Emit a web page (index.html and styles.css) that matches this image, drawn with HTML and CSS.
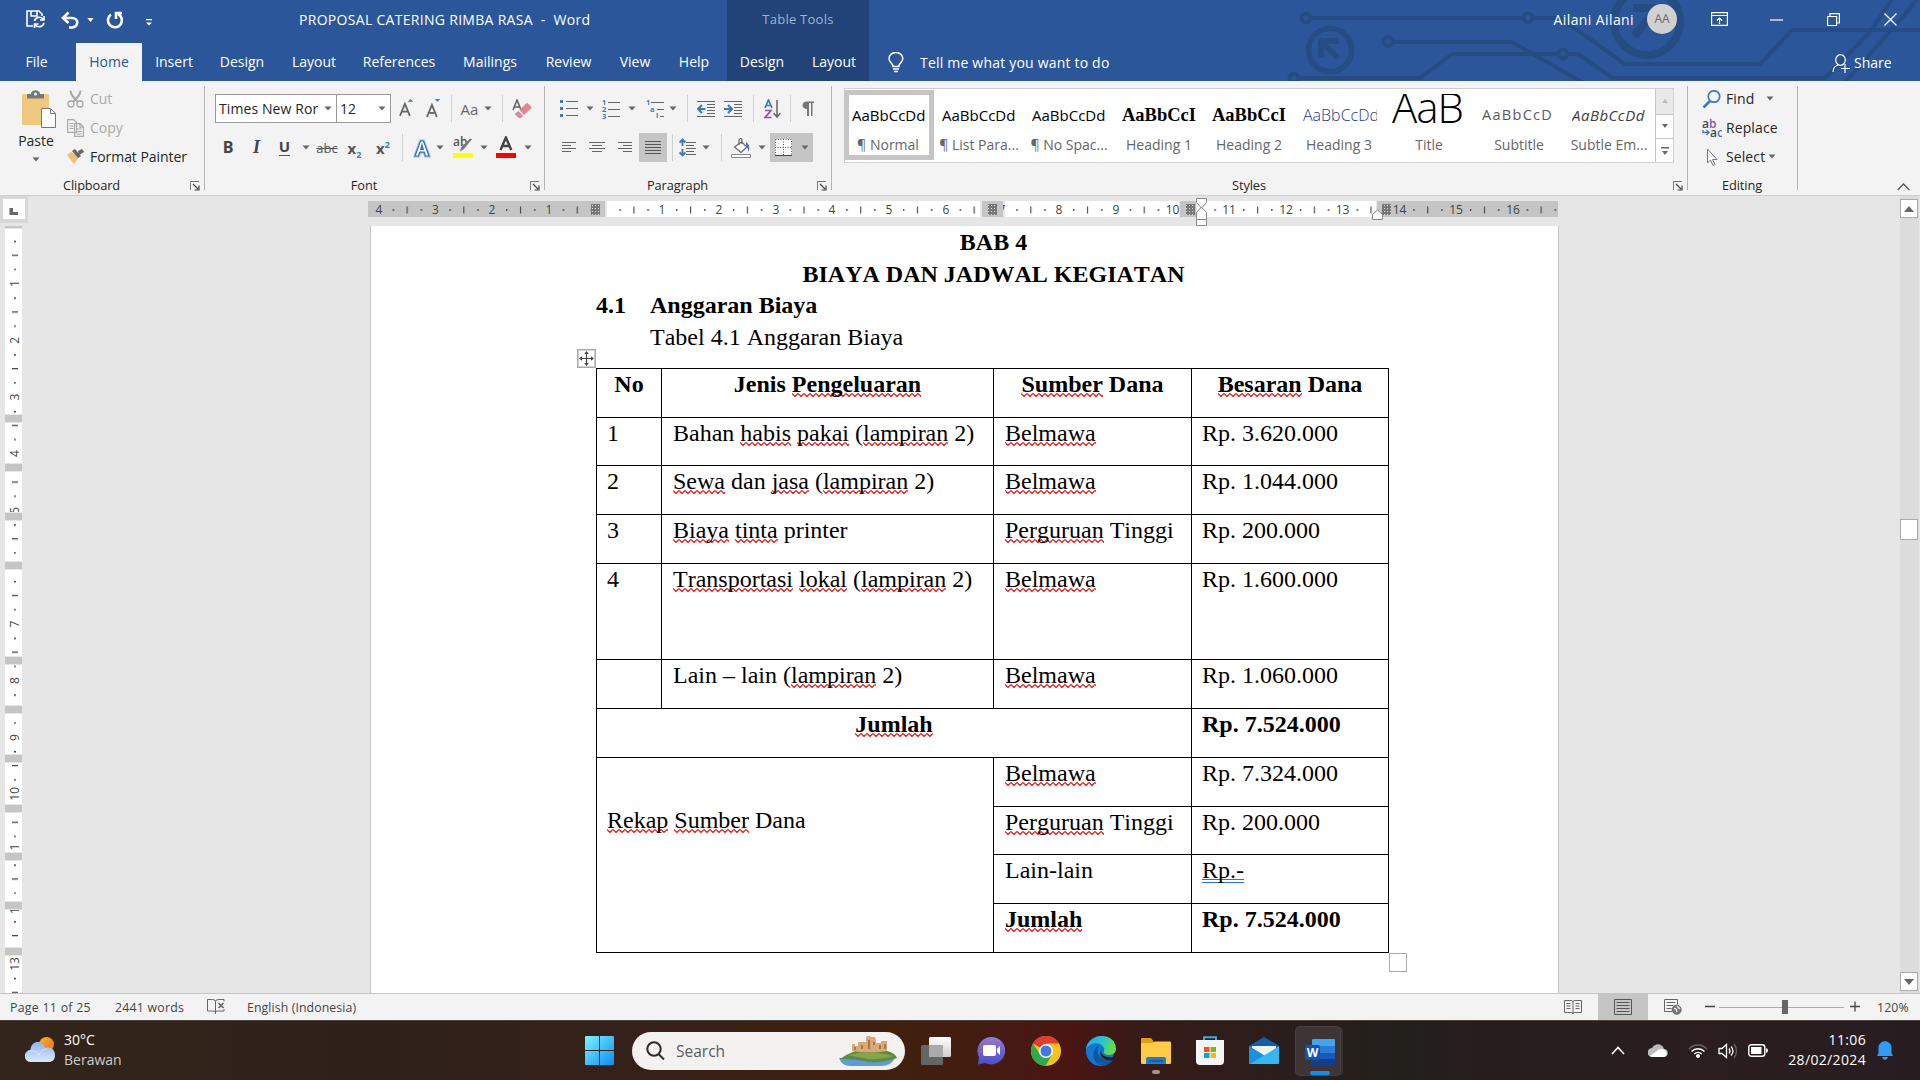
FILE: index.html
```html
<!DOCTYPE html>
<html lang="en">
<head>
<meta charset="utf-8">
<title>PROPOSAL CATERING RIMBA RASA - Word</title>
<link rel="stylesheet" href="styles.css">
</head>
<body>
<svg class="defs" width="0" height="0">
  <defs>
    <symbol id="caret" viewBox="0 0 8 5"><path d="M.5 .5h7L4 4.5z" fill="#666"/></symbol>
    <symbol id="launcher" viewBox="0 0 10 10"><path d="M.5 9V.5H9" fill="none" stroke="#777"/><path d="M3 3l5 5M9 4.500V9H4.500" fill="none" stroke="#444" stroke-width="1.200"/></symbol>
  </defs>
</svg>

<header class="titlebar">
  <svg class="circuit" width="640" height="81" viewBox="0 0 640 81" fill="none" stroke="#264c84" stroke-width="4">
    <circle cx="26" cy="18" r="4.500"/><path d="M31 18h213M252 18h28l65 46h135l32-34h128"/><circle cx="248" cy="18" r="4.500"/>
    <circle cx="50" cy="50" r="21.500" stroke-width="5.500"/><path d="M41 58V41h18M42 42l16 16" stroke-width="6"/>
    <circle cx="108" cy="41.500" r="4.500"/><path d="M113 42h119l70 40"/>
    <circle cx="14" cy="78" r="4.500"/><path d="M19 78h121l32-24h106"/><circle cx="283" cy="54" r="4.500"/><path d="M288 54h10l35 24h212l45-46 23-34"/>
    <path d="M565 82L622 18l16-20"/>
    <circle cx="367" cy="22" r="33" stroke-width="8"/><path d="M353 8h25v24M376 10l-22 26" stroke-width="8"/>
  </svg>
  <div class="titlerow">
    <div class="qat">
      <svg width="20" height="20" viewBox="0 0 20 20" fill="none" stroke="#fff" stroke-width="1.600"><path d="M7 16H1V1h12l3 3v2M5 1v5h6V1"/><path d="M8.500 11a5 5 0 0 1 9-1.500M18 6v4h-4M18 13a5 5 0 0 1-9 1.500M8.500 18v-4h4"/></svg>
      <svg width="19" height="18" viewBox="0 0 19 18" fill="none" stroke="#fff" stroke-width="2.600"><path d="M2 7h9c7 0 7 9 0 9.500H8M7.500 1.500L2 7l5.500 5"/></svg>
      <svg class="mini" width="7" height="4" viewBox="0 0 8 5"><path d="M0 0h8L4 5z" fill="#fff"/></svg>
      <svg width="18" height="18" viewBox="0 0 18 18" fill="none" stroke="#fff" stroke-width="2.600"><path d="M5 3.500A7 7 0 1 0 12 3M10 8V2h6"/></svg>
      <svg class="more" width="6" height="7" viewBox="0 0 6 7"><path d="M0 0h6v1.300H0zM0 3.500h6L3 6.500z" fill="#fff"/></svg>
    </div>
    <div class="doctitle">PROPOSAL CATERING RIMBA RASA&nbsp; -&nbsp; Word</div>
    <div class="context">Table Tools</div>
    <div class="account">Ailani Ailani</div>
    <div class="avatar">AA</div>
    <div class="winbtns">
      <svg width="17" height="14" viewBox="0 0 17 14" fill="none" stroke="#fff" stroke-width="1.200"><path d="M.6.600h15.800v12.800H.6zM.6 3.500h15.800M8.500 12V6M5.800 8.500L8.500 6l2.700 2.500"/></svg>
      <svg width="13" height="13" viewBox="0 0 13 13" stroke="#fff" stroke-width="1.200"><path d="M0 7h13"/></svg>
      <svg width="13" height="13" viewBox="0 0 13 13" fill="none" stroke="#fff" stroke-width="1.200"><path d="M.6 3.500h9v9h-9zM3 3.500V.6h9.400v9.400H9.600"/></svg>
      <svg width="13" height="13" viewBox="0 0 13 13" fill="none" stroke="#fff" stroke-width="1.300"><path d="M.5.500l12 12M12.500.500l-12 12"/></svg>
    </div>
  </div>
  <nav class="tabs">
    <span>File</span><span class="active">Home</span><span>Insert</span><span>Design</span><span>Layout</span><span>References</span><span>Mailings</span><span>Review</span><span>View</span><span class="help">Help</span><span class="ctx">Design</span><span class="ctx">Layout</span>
    <div class="tell"><svg width="16" height="21" viewBox="0 0 16 21" fill="none" stroke="#fff" stroke-width="1.500"><path d="M5 14.500c0-3-4-4-4-8a6.800 6 0 0 1 13.800 0c0 4-4 5-4 8zM5 17h6M6 19.500h4"/></svg>Tell me what you want to do</div>
    <div class="share"><svg width="18" height="19" viewBox="0 0 18 19" fill="none" stroke="#fff" stroke-width="1.200"><ellipse cx="8.500" cy="6" rx="4.800" ry="5.300"/><path d="M1 18c0-4 2-6 5-7M13 10v9M9 14.500h9"/></svg>Share</div>
  </nav>
</header>

<section class="ribbon">
  <div class="group clipboard">
    <div class="groupbody">
      <div class="paste">
        <svg width="34" height="38" viewBox="0 0 34 38"><rect y="4" width="27" height="31" rx="1.500" fill="#edc87e"/><path d="M5 8.500V4h4c0-5 9-5 9 0h4v4.500z" fill="#777"/><circle cx="13.500" cy="4" r="1.500" fill="#f3f3f3"/><path d="M19.500 18.500h9l5 5v14h-14z" fill="#fff" stroke="#777"/><path d="M28.500 18.500v5h5" fill="none" stroke="#777"/></svg>
        <span>Paste</span><svg width="8" height="5"><use href="#caret"/></svg>
      </div>
      <div class="cliplist">
        <div class="off"><svg width="17" height="18" viewBox="0 0 17 18" fill="none" stroke="#aaa" stroke-width="1.400"><circle cx="4" cy="14" r="3"/><circle cx="13" cy="14" r="3"/><path d="M3.500.500c0 4 3 7 7.500 11.500M13.500.500c0 4-3 7-7.500 11.500" stroke-width="2"/></svg>Cut</div>
        <div class="off"><svg width="17" height="18" viewBox="0 0 17 18" fill="#f3f3f3" stroke="#aaa" stroke-width="1.200"><path d="M.6.600h6l3 3v9.800h-9zM7.600 4.600h5.500l3.300 3.300v9.500H7.600zM13 4.600v3.500h3.400M2.500 4.500h4M2.500 7h4M2.500 9.500h4M9.500 10h5M9.500 12.500h5M9.500 15h5"/></svg>Copy</div>
        <div><svg width="17" height="15" viewBox="0 0 17 15"><path d="M0 6l4-3 8 5-5 7z" fill="#edc07a"/><path d="M5 2l3-2 6 7-3 2zM11 2l4-2 2 3-5 3z" fill="#666"/></svg>Format Painter</div>
      </div>
    </div>
    <div class="label">Clipboard<svg width="10" height="10"><use href="#launcher"/></svg></div>
  </div>

  <div class="group font">
    <div class="row fontrow1">
      <div class="combo name"><span>Times New Ror</span><svg width="8" height="5"><use href="#caret"/></svg></div>
      <div class="combo size"><span>12</span><svg width="8" height="5"><use href="#caret"/></svg></div>
      <svg class="grow" width="15" height="19" viewBox="0 0 14 18"><path d="M.8 17L5.500 5.500 10.200 17M2.500 13h6" fill="none" stroke="#666" stroke-width="1.700"/><path d="M8 3.500L10.700 1l2.800 2.500z" fill="#4a7ebb"/></svg>
      <svg class="grow" width="15" height="19" viewBox="0 0 14 18"><path d="M.8 18L5.500 6.500 10.200 18M2.500 14h6" fill="none" stroke="#666" stroke-width="1.700"/><path d="M8 1h5.500l-2.700 2.500z" fill="#4a7ebb"/></svg>
      <i class="sep"></i>
      <span class="gray">Aa</span>
      <svg width="8" height="5"><use href="#caret"/></svg>
      <i class="sep"></i>
      <svg width="20" height="20" viewBox="0 0 20 20"><path d="M1 11L5 1l4 10M2 8h6" fill="none" stroke="#666" stroke-width="1.600"/><path d="M7.500 11L14 4.500q1-1 2 0l3 3q1 1 0 2L12 16z" fill="#e58398"/><path d="M6.500 12l4.500 5-2 2q-1 .5-2 0L3.500 16q-1-1 0-2z" fill="#e58398"/></svg>
    </div>
    <div class="row fontrow2">
      <b class="fmt">B</b><b class="fmt it">I</b><b class="fmt ul">U</b>
      <svg width="8" height="5"><use href="#caret"/></svg>
      <span class="strike">abc</span>
      <span class="script">x<sub>2</sub></span>
      <span class="script">x<sup>2</sup></span>
      <i class="sep"></i>
      <svg width="20" height="20" viewBox="0 0 20 20"><path d="M3 18L8.500 3h3L17 18h-3.500l-1.300-3.800H7.800L6.500 18zM8.700 11.500h2.600L10 7z" fill="#fff" stroke="#9cc3ee" stroke-width="3"/><path d="M3 18L8.500 3h3L17 18h-3.500l-1.300-3.800H7.800L6.500 18zM8.700 11.500h2.600L10 7z" fill="#fff" stroke="#2f6fba" stroke-width="1.200"/></svg>
      <svg width="8" height="5"><use href="#caret"/></svg>
      <svg class="tall" width="20" height="22" viewBox="0 -2 20 22"><text x="0" y="8" class="abtext">ab</text><path d="M19 1L11 11l-4 2.500 1-4 9-9z" fill="#777"/><path d="M0 15h20v5H0z" fill="#ff0"/></svg>
      <svg width="8" height="5"><use href="#caret"/></svg>
      <svg class="tall" width="20" height="22" viewBox="0 -2 20 22"><path d="M4.500 12L9.900-.5 15.300 12M6.500 8h7" fill="none" stroke="#444" stroke-width="2.400"/><path d="M0 15h20v5H0z" fill="red"/></svg>
      <svg width="8" height="5"><use href="#caret"/></svg>
    </div>
    <div class="label">Font<svg width="10" height="10"><use href="#launcher"/></svg></div>
  </div>

  <div class="group para">
    <div class="row pararow1">
      <svg width="18" height="19" viewBox="0 0 18 19"><path d="M0 1h3v3H0zM0 8h3v3H0zM0 15h3v3H0z" fill="#4179b5"/><path d="M6 2.500h12M6 9.500h12M6 16.500h12" stroke="#666"/></svg>
      <svg width="8" height="5"><use href="#caret"/></svg>
      <svg width="18" height="20" viewBox="0 0 18 20"><g class="num"><text x="0" y="6">1</text><text x="0" y="13">2</text><text x="0" y="20">3</text></g><path d="M6 3.500h12M6 10.500h12M6 17.500h12" stroke="#666"/></svg>
      <svg width="8" height="5"><use href="#caret"/></svg><i></i>
      <svg width="18" height="20" viewBox="0 0 18 20"><g class="num"><text x="0" y="6">1</text><text x="4" y="13">a</text><text x="10" y="19">i</text></g><path d="M5 3.500h13M11 10.500h7M14 17.500h4" stroke="#666"/></svg>
      <svg width="8" height="5"><use href="#caret"/></svg>
      <i class="sep"></i>
      <svg width="18" height="18" viewBox="0 0 18 18"><path d="M0 1.500h18M10 4.500h8M10 7.500h8M10 10.500h8M10 13.500h8M0 16.500h18" stroke="#666"/><path d="M8.500 9H2M5 5L1 9l4 4" stroke="#4179b5" stroke-width="2.200" fill="none"/></svg>
      <svg width="18" height="18" viewBox="0 0 18 18"><path d="M0 1.500h18M10 4.500h8M10 7.500h8M10 10.500h8M10 13.500h8M0 16.500h18" stroke="#666"/><path d="M0 9h7M4 5l4 4-4 4" stroke="#4179b5" stroke-width="2.200" fill="none"/></svg>
      <i class="sep"></i>
      <svg width="17" height="20" viewBox="0 0 17 20" fill="none" stroke-width="1.700"><path d="M1 9l3.500-8L8 9M2 6.500h5" stroke="#4179b5"/><path d="M1 11.500h6L1 18.500h6.500" stroke="#8a55b0"/><path d="M13 1v17M9.500 14l3.500 4 3.500-4" stroke="#666" stroke-width="1.500"/></svg>
      <i class="sep"></i>
      <svg width="12" height="16" viewBox="0 0 12 16"><path d="M5 8C-1 8-1 .5 5 .500h7v1.500h-1.500V15H9V2H7v13H5z" fill="#777"/></svg>
    </div>
    <div class="row pararow2">
      <svg width="14" height="13" viewBox="0 0 14 13" stroke="#666"><path d="M0 1.500h14M0 4.500h9M0 7.500h14M0 10.500h9"/></svg>
      <svg width="16" height="13" viewBox="0 0 16 13" stroke="#666"><path d="M0 1.500h16M3 4.500h10M0 7.500h16M3 10.500h10"/></svg><i></i>
      <svg width="14" height="13" viewBox="0 0 14 13" stroke="#666"><path d="M0 1.500h14M5 4.500h9M0 7.500h14M5 10.500h9"/></svg>
      <span class="pressed"><svg width="16" height="14" viewBox="0 0 16 14" stroke="#555"><path d="M0 .500h16M0 3.500h16M0 6.500h16M0 9.500h16M0 12.500h16"/></svg></span>
      <i class="sep"></i>
      <svg width="18" height="19" viewBox="0 0 18 19"><path d="M7 4.500h10M7 7.500h8M7 10.500h10M7 13.500h8M7 16.500h10" stroke="#666"/><path d="M3.500 1v7M.6 4.500L3.500 1.500l3 3M3.500 11v7M.6 14.500l2.900 3 3-3" stroke="#3f78c0" stroke-width="1.900" fill="none"/></svg>
      <svg width="8" height="5"><use href="#caret"/></svg>
      <i class="sep"></i>
      <svg width="20" height="20" viewBox="0 0 20 20"><path d="M3.500 9l7-5 5.500 5-6 5.500z" fill="#fff" stroke="#666" stroke-width="1.200"/><path d="M8 7V2q2-3 3 0v4" fill="none" stroke="#666" stroke-width="1.200"/><path d="M15 4q5 3 2.500 10Q17 10 15 8z" fill="#4179b5"/><path d="M.5 16.500h19v3H.5z" fill="#fff" stroke="#888"/></svg>
      <svg width="8" height="5"><use href="#caret"/></svg>
      <span class="pressed borders"><svg width="17" height="17" viewBox="0 0 17 17"><path d="M0 0h17v17H0z" fill="#fff"/><path d="M.5.500h16v16M.5.500v16M8.500 0v16M0 8.500h17" stroke="#555" stroke-dasharray="1 1.500" fill="none"/><path d="M0 16.500h17" stroke="#444"/></svg><svg width="8" height="5"><use href="#caret"/></svg></span>
    </div>
    <div class="label">Paragraph<svg width="10" height="10"><use href="#launcher"/></svg></div>
  </div>

  <div class="group styles">
    <div class="gallery">
      <div class="style on"><span>AaBbCcDd</span><em>¶ Normal</em></div>
      <div class="style"><span>AaBbCcDd</span><em>¶ List Para...</em></div>
      <div class="style"><span>AaBbCcDd</span><em>¶ No Spac...</em></div>
      <div class="style"><span class="h1">AaBbCcI</span><em>Heading 1</em></div>
      <div class="style"><span class="h1">AaBbCcI</span><em>Heading 2</em></div>
      <div class="style"><span class="h3">AaBbCcDd</span><em>Heading 3</em></div>
      <div class="style"><span class="title">AaB</span><em>Title</em></div>
      <div class="style"><span class="subtitle">AaBbCcD</span><em>Subtitle</em></div>
      <div class="style"><span class="subtle">AaBbCcDd</span><em>Subtle Em...</em></div>
      <div class="galnav">
        <div class="dis"><svg width="6" height="4" viewBox="0 0 6 4"><path d="M0 4h6L3 0z" fill="#bbb"/></svg></div>
        <div><svg width="6" height="4" viewBox="0 0 6 4"><path d="M0 0h6L3 4z" fill="#666"/></svg></div>
        <div><svg width="8" height="8" viewBox="0 0 8 8"><path d="M0 0h8v1.500H0zM1 4h6L4 8z" fill="#666"/></svg></div>
      </div>
    </div>
    <div class="label">Styles<svg width="10" height="10"><use href="#launcher"/></svg></div>
  </div>

  <div class="group editing">
    <div class="editlist">
      <div><svg width="20" height="18" viewBox="0 0 20 18" fill="none" stroke="#4179b5"><circle cx="12" cy="6.500" r="5.700" stroke-width="1.700"/><path d="M8 11l-6.500 6.500" stroke-width="2.600"/></svg>Find<svg class="far" width="8" height="5"><use href="#caret"/></svg></div>
      <div><svg width="20" height="18" viewBox="0 0 20 18"><text x="0" y="8.500" class="rp"><tspan fill="#444">a</tspan><tspan fill="#8a55b0">b</tspan></text><text x="8" y="18" class="rp"><tspan fill="#444">a</tspan><tspan fill="#4179b5">c</tspan></text><path d="M1 11v2.500h6M4.500 11L7 13.500 4.500 16" fill="none" stroke="#4179b5" stroke-width="1.300"/></svg>Replace</div>
      <div><svg width="20" height="18" viewBox="0 0 20 18"><path d="M5.500 1v14l3-3 2.500 5.500 2-1-2.500-5H15z" fill="#fff" stroke="#777"/></svg>Select<svg class="near" width="8" height="5"><use href="#caret"/></svg></div>
    </div>
    <div class="label">Editing</div>
  </div>
  <svg class="collapse" width="13" height="8" viewBox="0 0 13 8"><path d="M.7 7l5.800-6 5.800 6" fill="none" stroke="#555" stroke-width="1.300"/></svg>
</section>

<main class="workspace">
  <div class="editor">
    <div class="rulerbar">
      <div class="tabstop"><svg width="22" height="20" viewBox="0 0 22 20"><path d="M0 0h22v20H0z" fill="#fdfdfd"/><path d="M6.500 9v7H15v-3h-5V9z" fill="#666"/></svg></div>
      <svg class="hruler" width="1192" height="30" viewBox="368 196 1192 30">
        <defs>
          <pattern id="ticks" x="605.500" y="201" width="56.700" height="17" patternUnits="userSpaceOnUse"><path d="M14 8h1.300v2H14zM27.900 5.500h1.100v7h-1.100zM42 8h1.300v2H42z" fill="#444"/></pattern>
          <pattern id="hatch" width="3" height="3" patternUnits="userSpaceOnUse"><path d="M0 0h3v3H0z" fill="#777"/><path d="M1 1h1v1H1z" fill="#ddd"/></pattern>
        </defs>
        <path d="M368 201h237v16H368zM1377 201h181v16h-181z" fill="#c5c5c5"/>
        <path d="M607 201h373v16H607zM1005 201h174v16h-174zM1197 201h179v16h-179z" fill="#fff"/>
        <path d="M368 201h1190v16H368z" fill="url(#ticks)"/>
        <g class="rulernum">
          <text x="379" y="214">4</text><text x="435.500" y="214">3</text><text x="492" y="214">2</text><text x="549" y="214">1</text>
          <text x="662" y="214">1</text><text x="719" y="214">2</text><text x="776" y="214">3</text><text x="832" y="214">4</text><text x="889" y="214">5</text><text x="946" y="214">6</text><text x="1002" y="214">7</text><text x="1059" y="214">8</text><text x="1116" y="214">9</text><text x="1172.500" y="214">10</text><text x="1229" y="214">11</text><text x="1286" y="214">12</text><text x="1342.500" y="214">13</text><text x="1399.500" y="214">14</text><text x="1456" y="214">15</text><text x="1513" y="214">16</text>
        </g>
        <path d="M982 201h21v16h-21zM1180 201h16v16h-16z" fill="#c5c5c5"/>
        <path d="M591 204h9v11h-9zM988 204h9v11h-9zM1186 204h9v11h-9zM1382 204h9v11h-9z" fill="url(#hatch)"/>
        <path d="M1196.500 198.500h10v4l-4.500 5 4.500 5v7h-10v-7l4.500-5-4.500-5zM1196.500 219.500h10v6h-10z" fill="#fff" stroke="#888"/>
        <path d="M1372.500 219.500v-5l5-4.500 5 4.500v5z" fill="#fff" stroke="#888"/>
      </svg>
    </div>
    <div class="canvas">
      <svg class="vruler" width="28" height="767" viewBox="0 226 28 767">
        <defs><pattern id="vticks" x="5" y="226.800" width="17" height="56.700" patternUnits="userSpaceOnUse"><path d="M9 14h2v1.300H9zM7 27.900h6v1.100H7zM9 42h2v1.300H9z" fill="#444"/></pattern></defs>
        <path d="M5 229h17v764H5z" fill="#fff"/><path d="M5 229h17v764H5z" fill="url(#vticks)"/>
        <g class="rulernum">
          <text transform="translate(19 283.500) rotate(-90)">1</text><text transform="translate(19 340.200) rotate(-90)">2</text><text transform="translate(19 397) rotate(-90)">3</text><text transform="translate(19 453.600) rotate(-90)">4</text><text transform="translate(19 510.300) rotate(-90)">5</text><text transform="translate(19 624) rotate(-90)">7</text><text transform="translate(19 680.500) rotate(-90)">8</text><text transform="translate(19 737.500) rotate(-90)">9</text><text transform="translate(19 793.800) rotate(-90)">10</text><text transform="translate(19 850.500) rotate(-90)">11</text><text transform="translate(19 907.200) rotate(-90)">12</text><text transform="translate(19 964) rotate(-90)">13</text>
        </g>
        <path d="M5 226h17v2H5zM5 415h17v7H5zM5 464h17v7H5zM5 513h17v7H5zM5 562h17v7H5zM5 657h17v7H5zM5 706h17v7H5zM5 755h17v7H5zM5 805h17v7H5zM5 853h17v7H5zM5 902h17v7H5zM5 948h17v7H5z" fill="#c5c5c5" stroke="#e6e6e6" stroke-width="2" paint-order="stroke"/>
      </svg>
      <article class="page">
        <div class="headings">
          <p class="chapter">BAB 4</p>
          <p class="chapter">BIAYA DAN JADWAL KEGIATAN</p>
          <p class="section"><span>4.1</span>Anggaran Biaya</p>
          <p class="caption">Tabel 4.1 Anggaran Biaya</p>
        </div>
        <div class="tablewrap">
          <svg class="movehandle" width="19" height="19" viewBox="0 0 19 19"><path d="M.8.800h17.400v17.400H.8z" fill="#fff" stroke="#aaa" stroke-width="1.600"/><path d="M9.500 4v11M4 9.500h11" stroke="#444" stroke-width="1.200"/><path d="M9.500 2l2.300 3H7.200zM9.500 17l2.300-3H7.200zM2 9.500l3-2.300v4.600zM17 9.500l-3-2.300v4.600z" fill="#444"/></svg>
          <table>
            <colgroup><col class="c1"><col class="c2"><col class="c3"><col class="c4"></colgroup>
            <tr class="r49"><th>No</th><th>Jenis <u>Pengeluaran</u></th><th><u>Sumber</u> Dana</th><th><u>Besaran</u> Dana</th></tr>
            <tr class="r48"><td>1</td><td>Bahan <u>habis</u> <u>pakai</u> (<u>lampiran</u> 2)</td><td><u>Belmawa</u></td><td>Rp. 3.620.000</td></tr>
            <tr class="r49"><td>2</td><td><u>Sewa</u> dan <u>jasa</u> (<u>lampiran</u> 2)</td><td><u>Belmawa</u></td><td>Rp. 1.044.000</td></tr>
            <tr class="r49"><td>3</td><td><u>Biaya</u> <u>tinta</u> printer</td><td><u>Perguruan</u> Tinggi</td><td>Rp. 200.000</td></tr>
            <tr class="r96"><td>4</td><td><u>Transportasi</u> <u>lokal</u> (<u>lampiran</u> 2)</td><td><u>Belmawa</u></td><td>Rp. 1.600.000</td></tr>
            <tr class="r49"><td></td><td>Lain – lain (<u>lampiran</u> 2)</td><td><u>Belmawa</u></td><td>Rp. 1.060.000</td></tr>
            <tr class="r49"><th colspan="3"><u>Jumlah</u></th><th class="left">Rp. 7.524.000</th></tr>
            <tr class="r49"><td colspan="2" rowspan="4" class="recap"><u>Rekap</u> <u>Sumber</u> Dana</td><td><u>Belmawa</u></td><td>Rp. 7.324.000</td></tr>
            <tr class="r48"><td><u>Perguruan</u> Tinggi</td><td>Rp. 200.000</td></tr>
            <tr class="r49"><td>Lain-lain</td><td><span class="grammar">Rp.-</span></td></tr>
            <tr class="r49"><th class="left"><u>Jumlah</u></th><th class="left">Rp. 7.524.000</th></tr>
          </table>
          <i class="resize"></i>
        </div>
      </article>
    </div>
  </div>
  <div class="scrollbar">
    <div class="sbtn"><svg width="10" height="6" viewBox="0 0 10 6"><path d="M0 6h10L5 0z" fill="#666"/></svg></div>
    <div class="thumb"></div>
    <div class="sbtn"><svg width="10" height="6" viewBox="0 0 10 6"><path d="M0 0h10L5 6z" fill="#666"/></svg></div>
  </div>
</main>

<footer class="statusbar">
  <span class="s-page">Page 11 of 25</span><span class="s-words">2441 words</span>
  <span class="s-proof"><svg width="18" height="15" viewBox="0 0 18 15" fill="none" stroke="#666"><path d="M.5.500h5q3 0 3 2v11q0-2-3-1.500h-5zM8.500 2.500q0-2 3-2h5.500v2M8.500 13.500q0-2 3-1.500h5.500v-2M8.500 13v2"/><path d="M11.500 4l5 5M16.500 4l-5 5" stroke-width="1.700"/></svg></span>
  <span class="s-lang">English (Indonesia)</span>
  <div class="views">
    <span><svg width="18" height="15" viewBox="0 0 18 15" fill="none" stroke="#666"><path d="M.5.500h7q1.500.3 1.500 1.500 0-1.200 1.500-1.500h7v12h-7q-1.500.3-1.500 1.500 0-1.200-1.500-1.500h-7zM9 2v12M2.500 3.500h4M2.500 6h4M2.500 8.500h4M11.500 3.500h4M11.500 6h4M11.500 8.500h4"/></svg></span>
    <span class="cur"><svg width="18" height="16" viewBox="0 0 18 16" fill="none" stroke="#555"><path d="M.5.500h17v15H.5zM2.500 3.500h13M2.500 6.500h13M2.500 9.500h13M2.500 12.500h13"/></svg></span>
    <span><svg width="18" height="16" viewBox="0 0 18 16" fill="none" stroke="#666"><path d="M8 12.500H.5V.500h13v5M2.500 3.500h9M2.500 6.500h7M2.500 9.500h5"/><circle cx="12.700" cy="10.700" r="4.500" fill="#777"/><path d="M10 9l2 1 1 3M13 7l3 3" stroke="#eee" stroke-width="1.300"/></svg></span>
  </div>
  <div class="zoom">
    <svg width="156" height="16" viewBox="0 0 156 16"><path d="M0 7.500h10M145 7.500h10M150 2.500v10" stroke="#444" stroke-width="1.300"/><path d="M14 8.500h125" stroke="#aaa"/><path d="M77 1h6v14h-6z" fill="#666"/></svg>
    <span>120%</span>
  </div>
</footer>

<div class="taskbar">
  <div class="weather">
    <svg width="31" height="26" viewBox="0 0 31 26"><defs><linearGradient id="sun" x1="0" y1="0" x2="1" y2="1"><stop offset="0" stop-color="#f5b72e"/><stop offset="1" stop-color="#f06c12"/></linearGradient><linearGradient id="cl" x1="0" y1="0" x2="0" y2="1"><stop offset="0" stop-color="#8fb2ef"/><stop offset="1" stop-color="#dbe8fb"/></linearGradient></defs><circle cx="21.500" cy="7.500" r="7.500" fill="url(#sun)"/><path d="M6 25a6 6 0 0 1-.5-12C6 3 18 2.500 20 11c6-2 10 2 10 7s-3 7-6 7z" fill="url(#cl)"/><path d="M3 14c6-1 9 1 11 4 1-4 4-6 8-6" fill="none" stroke="#f0f5fd" stroke-width="1" opacity=".6"/></svg>
    <div>30°C<em>Berawan</em></div>
  </div>
  <div class="apps">
    <svg width="29" height="29" viewBox="0 0 29 29"><defs><linearGradient id="win" gradientUnits="userSpaceOnUse" x1="0" y1="0" x2="29" y2="29"><stop offset="0" stop-color="#7cf3ff"/><stop offset="1" stop-color="#0a8df5"/></linearGradient></defs><path d="M0 1q0-1 1-1h13v14H0zM15 0h13q1 0 1 1v13H15zM0 15h14v14H1q-1 0-1-1zM15 15h14v13q0 1-1 1H15z" fill="url(#win)"/></svg>
    <div class="search">
      <svg width="19" height="19" viewBox="0 0 19 19" fill="none" stroke="#2b2b2b" stroke-width="2"><circle cx="8" cy="8" r="6.700"/><path d="M12.500 13l5.500 5.500"/></svg><span>Search</span>
      <svg class="castle" width="60" height="30" viewBox="0 0 60 30"><path d="M1 22h56q-4 8-14 8H12Q4 30 1 22z" fill="#5c9be0"/><path d="M2 23q14-10 28-10 26 0 29 9-14 5-28 4-12-3-29-3z" fill="#5f8b3a"/><path d="M10 19q20-5 46 1-16 4-26 3z" fill="#86a748"/><path d="M14 15V8h3v2h3V6h8V2l1-2h3l1 1h4l1 3v3h5V5h6v10q-18 3-35 0z" fill="#d9a978"/><path d="M17 11v3M24 9v4M31 4v9M36 6v3M42 9v4M47 8v5" stroke="#96663e" stroke-width="1.500"/></svg>
    </div>
    <svg class="a1" width="30" height="28" viewBox="0 0 30 28"><defs><linearGradient id="tv" x1="0" y1="0" x2="0" y2="1"><stop offset="0" stop-color="#fff"/><stop offset="1" stop-color="#cfcfcf"/></linearGradient></defs><rect y="8" width="22" height="20" rx="1.500" fill="#666"/><rect x="8" width="22" height="20" rx="1.500" fill="url(#tv)"/><path d="M8 8h14v12H8z" fill="#aaa"/></svg>
    <svg width="30" height="29" viewBox="0 0 30 29"><defs><linearGradient id="ch" x1="0" y1="0" x2="0" y2="1"><stop offset="0" stop-color="#9a79d2"/><stop offset="1" stop-color="#4a4fc4"/></linearGradient></defs><path d="M15 1a14 13.700 0 1 1-6 26l-7 1.500 1-7A14 14 0 0 1 15 1z" fill="url(#ch)"/><rect x="7" y="9" width="13" height="11" rx="2" fill="#fff"/><path d="M21 13l3-3v9l-3-3z" fill="#fff"/></svg>
    <svg width="30" height="30" viewBox="0 0 30 30"><circle cx="15" cy="15" r="15" fill="#fbc116"/><path d="M15 15L2 7.500A15 15 0 0 1 28 7.500H15z" fill="#e33b2e"/><path d="M2 7.500A15 15 0 0 0 14.500 30L21 18.500 15 22a7 7 0 0 1-6-3.500z" fill="#2da94f"/><circle cx="15" cy="15" r="7" fill="#fff"/><circle cx="15" cy="15" r="5.500" fill="#3a7be8"/></svg>
    <svg width="30" height="30" viewBox="0 0 30 30"><defs><linearGradient id="ed" x1="0" y1="0" x2="1" y2=".4"><stop offset="0" stop-color="#1da0e8"/><stop offset=".55" stop-color="#2cc3d2"/><stop offset="1" stop-color="#61dd4a"/></linearGradient></defs><path d="M15 0a15 15 0 1 0 11 25l2-8L28 5z" fill="#1278cf"/><path d="M0 14C1-4 30-5 30 13c0 7-10 7-12 4-1-2 1-2 0-5C15 5 3 6 0 14z" fill="url(#ed)"/><path d="M13 9c-4 8 0 16 14 15-4 5-9 6-13 5-8-3-9-14-1-20z" fill="#0b57a4"/><path d="M17 12.500c-4 3-1 10 10 8.500l3-5v8l-3 0c-11 2-16-7-10-11.500z" fill="#3b1a15"/></svg>
    <div class="app run"><svg width="30" height="26" viewBox="0 0 30 26"><path d="M0 1q0-1 1-1h9l3 4h16v20H0z" fill="#dc9d1b"/><path d="M0 5h12l2-1.500h15q1 0 1 1V25q0 1-1 1H1q-1 0-1-1z" fill="#ffcc43"/><path d="M5 26v-5q0-2 2-2h16q2 0 2 2v5z" fill="#1a7fd0"/><path d="M8 23h14" stroke="#0e5290" stroke-width="1.300"/></svg></div>
    <svg width="28" height="29" viewBox="0 0 28 29"><path d="M8 6V1.200h12V6" fill="none" stroke="#27b2ea" stroke-width="2"/><path d="M0 4h28v21q0 4-4 4H4q-4 0-4-4z" fill="#f5f5f5"/><path d="M8 11h5.500v5H8z" fill="#f25022"/><path d="M14.500 11H20v5h-5.500z" fill="#7fba00"/><path d="M8 17h5.500v5H8z" fill="#00a4ef"/><path d="M14.500 17H20v5h-5.500z" fill="#ffb900"/></svg>
    <svg width="30" height="27" viewBox="0 0 30 27"><path d="M0 9L15 0l15 9v8H0z" fill="#0f5ea8"/><path d="M3 9h24v6l-12 9L3 15z" fill="#f1f1f1"/><path d="M0 9l15 9.500L30 9v17q0 1-1 1H1q-1 0-1-1z" fill="#35b8f1"/><path d="M0 9l15 9.500L1 27q-1 0-1-1z" fill="#1c8fe0"/></svg>
    <div class="app word"><svg width="30" height="27" viewBox="0 0 30 27"><path d="M7 1q0-1 1-1h21q1 0 1 1v6H7z" fill="#41a5ee"/><path d="M7 7h23v7H7z" fill="#2b7cd3"/><path d="M7 14h23v6H7z" fill="#185abd"/><path d="M7 20h23v6q0 1-1 1H8q-1 0-1-1z" fill="#103f91"/><rect y="6" width="15" height="15" rx="1.500" fill="#1552b5"/><text x="7.500" y="17.500" class="wlogo">W</text></svg></div>
  </div>
  <div class="tray">
    <svg width="14" height="9" viewBox="0 0 14 9"><path d="M1 8l6-6.500L13 8" fill="none" stroke="#fff" stroke-width="1.700"/></svg>
    <svg class="cloud" width="20" height="13" viewBox="0 0 20 13"><path d="M5 13a5 4.500 0 0 1-1-9c3-5 10-5 12 1 5 0 5 8 0 8z" fill="#bbb"/><path d="M2 12l8-6q3-2 7 0 4 5-1 7H5q-2 0-3-1z" fill="#fff"/></svg>
    <svg class="wifi" width="20" height="15" viewBox="0 0 20 15" fill="none" stroke="#fff" stroke-width="1.500"><path d="M1 6a12 12 0 0 1 18 0" stroke="#6a6060"/><path d="M3.500 8.500a9 9 0 0 1 13 0M6.300 11a5.500 5.500 0 0 1 7.400 0"/><circle cx="10" cy="13" r="1.300" fill="#fff"/></svg>
    <svg class="vol" width="20" height="16" viewBox="0 0 20 16" fill="none" stroke="#fff" stroke-width="1.300"><path d="M1 5.500h3l4.500-4v13l-4.500-4H1zM11 5.500q2 2.500 0 5M13 3.500q4 4.500 0 9"/><path d="M16 1q5 7 0 14" stroke="#6a6060"/></svg>
    <svg class="bat" width="20" height="13" viewBox="0 0 20 13"><rect x=".8" y=".8" width="16" height="11.400" rx="2.500" fill="none" stroke="#fff" stroke-width="1.400"/><path d="M3 3h10.500v7H3zM18 4q2 .5 2 2.500T18 9z" fill="#fff"/></svg>
    <div class="clock">11:06<br>28/02/2024</div>
    <svg width="16" height="19" viewBox="0 0 16 19"><path d="M0 15l1.500-3V7c0-9 13-9 13 0v5l1.500 3zM5 16h6q-1 3-3 3t-3-3z" fill="#2f9cf5"/></svg>
  </div>
</div>
</body>
</html>
```
FILE: styles.css
```css
* { box-sizing: border-box; }
body {
  margin: 0; width: 1920px; height: 1080px; overflow: hidden;
  display: flex; flex-direction: column;
  font: 14px/20px "Open Sans", "Noto Sans", sans-serif; color: #262626; background: #e6e6e6;
}
svg { display: block; flex: none; }
.defs { position: absolute; }
em { font-style: normal; }

/* Title bar and tabs */
.titlebar { position: relative; height: 81px; background: #2b579a; color: #fff; flex: none; }
.circuit { position: absolute; right: 0; top: 0; }
.titlerow { position: relative; display: flex; height: 43px; align-items: center; }
.qat { display: flex; align-items: center; width: 299px; padding: 0 0 3px 26px; }
.qat svg:nth-child(2) { margin-left: 15px; }
.qat .mini { margin-left: 7px; }
.qat svg:nth-child(4) { margin-left: 12px; }
.qat .more { margin: 4px 0 0 22px; }
.doctitle { width: 428px; padding-bottom: 3px; white-space: pre; letter-spacing: .3px; }
.context { width: 142px; height: 43px; padding-top: 9px; background: #224377; color: #9fb3d4; text-align: center; font-size: 13px; letter-spacing: .25px; }
.account { width: 765px; text-align: right; padding-bottom: 3px; letter-spacing: .4px; }
.avatar { width: 30px; height: 30px; margin: -5px 0 0 13px; border-radius: 50%; background: #d0d0d0; color: #666; font-size: 12px; line-height: 30px; text-align: center; }
.winbtns { display: flex; align-items: center; padding: 0 0 5px 34px; }
.winbtns svg + svg { margin-left: 42px; }
.winbtns svg:nth-child(3), .winbtns svg:nth-child(4) { margin-left: 44px; }
.tabs {
  position: relative; display: grid; height: 38px; line-height: 37px; text-align: center;
  grid-template-columns: 76px 66px 64px 72px 72px 98px 84px 73px 60px 62px 72px 70px 1fr 88px;
}
.tabs > span:first-child { padding-right: 3px; }
.tabs .active { background: #f3f3f3; color: #2b579a; }
.tabs .help { padding-right: 4px; }
.tabs .ctx { background: #224377; }
.tabs .ctx:nth-child(11) { padding-right: 2px; }
.tell { display: flex; align-items: center; gap: 16px; padding: 0 0 2px 19px; letter-spacing: .2px; }
.share { display: flex; align-items: center; gap: 4px; line-height: 40px; }

/* Ribbon */
.ribbon { display: flex; height: 115px; flex: none; background: #f3f3f3; border-bottom: 1px solid #cfcfcf; position: relative; }
.group { position: relative; height: 110px; }
.group::after { content: ""; position: absolute; right: 0; top: 5px; width: 1px; height: 104px; background: #b5b5b5; }
.clipboard { width: 205px; }
.font { width: 340px; }
.para { width: 287px; }
.styles { width: 856px; }
.editing { width: 110px; }
.label { display: flex; justify-content: center; align-items: center; height: 18px; font-size: 12.8px; position: absolute; left: 0; right: 0; top: 95px; letter-spacing: -.1px; padding-right: 22px; }
.label svg { position: absolute; right: 5px; top: 5px; }
.editing .label { padding-right: 2px; }
.groupbody { display: flex; }
.paste { width: 58px; display: flex; flex-direction: column; align-items: center; padding: 9px 0 0 14px; }
.paste > svg:first-child { margin-left: 5px; }
.paste span { margin: 3px 0 6px; }
.cliplist { padding: 3px 0 0 9px; }
.cliplist div { height: 29px; display: flex; align-items: center; gap: 6px; white-space: nowrap; letter-spacing: -.05px; }
.off { color: #aaa; }
.row { display: grid; align-items: center; justify-items: center; }
.fontrow1 { grid-template-columns: 122px 54px 29px 26px 10px 27px 10px 18px 22px; padding: 12px 0 0 10px; height: 43px; }
.fontrow2 { grid-template-columns: 26px 31px 25px 18px 24px 31px 26px 12px 27px 10px 35px 8px 36px 8px; padding-left: 10px; height: 47px; }
.pararow1 { grid-template-columns: 34px 7px 36px 6px 6px 28px 8px 20px 18px 36px 4px 34px 2px 33px; padding: 12px 0 0 7px; height: 43px; }
.pararow2 { grid-template-columns: 34px 22px 3px 28px 28px 10px 21px 16px 14px 26px 16px 43px; padding-left: 7px; height: 47px; }
.sep { width: 1px; height: 27px; background: #d0d0d0; }
.grow { margin: -3px 0 0 1px; }
.combo { justify-self: stretch; height: 29px; border: 1px solid #999; background: #fff; display: flex; align-items: center; justify-content: space-between; padding: 0 4px 0 3px; white-space: nowrap; }
.combo span { letter-spacing: .1px; }
.combo.size { margin-left: -1px; }
.gray { color: #666; font-size: 15px; }
.fmt { font-size: 16px; color: #444; line-height: 20px; margin-top: -2px; }
.it { font-family: "Liberation Serif", serif; font-style: italic; font-size: 18px; }
.ul { border-bottom: 1.500px solid #555; line-height: 17px; font-size: 15px; }
.strike { font-size: 13px; text-decoration: line-through; color: #555; }
.script { font-weight: 700; font-size: 15px; color: #555; white-space: nowrap; line-height: 16px; }
.script sub, .script sup { font-size: 9px; color: #4179b5; line-height: 0; }
.abtext { font-size: 12px; font-weight: 600; fill: #555; }
.tall { margin-top: -2px; }
.num { font-size: 7.500px; font-weight: 700; fill: #4179b5; }
.pressed { align-self: center; justify-self: stretch; height: 29px; background: #c5c5c5; display: flex; align-items: center; justify-content: center; }
.borders { gap: 9px; }

.gallery { display: flex; width: 830px; height: 75px; margin: 7px 0 0 12px; background: #fff; border: 1px solid #d0d0d0; }
.style { width: 90px; height: 70px; margin-top: 1px; text-align: center; padding-top: 13px; overflow: hidden; white-space: nowrap; flex: none; }
.style.on { border: 5px solid #c5c5c5; padding: 8px 0 0; width: 90px; margin-left: -1px; margin-right: 1px; }
.style span { display: flex; width: 76px; height: 25px; margin: 0 auto; overflow: hidden; justify-content: flex-start; font-size: 15px; line-height: 24px; color: #000; }
.style.on span { margin-left: 3px; }
.style em { display: block; color: #666; line-height: 20px; margin: 7px 2px 0 0; }
.style span.h1 { font: bold 18.500px/25px "Liberation Serif", serif; }
.style span.h3 { color: #1f4080; font-weight: 300; font-size: 16px; width: 74px; }
.style span.title { font-size: 42px; font-weight: 300; line-height: 42px; height: 34px; margin-top: -9px; padding: 0; letter-spacing: -1px; align-items: flex-end; }
.style span.subtitle { color: #5a5a5a; letter-spacing: 1.300px; font-size: 14.500px; }
.style span.subtle { font-style: italic; color: #404040; letter-spacing: .5px; }
.galnav { width: 18px; margin-left: auto; border-left: 1px solid #c5c5c5; }
.galnav div { height: 24.500px; display: flex; align-items: center; justify-content: center; }
.galnav div + div { border-top: 1px solid #c5c5c5; }
.galnav .dis { background: #e9e9e9; }
.editlist { padding: 3px 0 0 14px; }
.editlist div { height: 29px; display: flex; align-items: center; gap: 4px; letter-spacing: .1px; }
.editlist .far { margin-left: 8px; }
.editlist .near { margin-left: -1px; }
.rp { font-size: 12px; font-weight: 600; }
.collapse { margin: 102px 0 0 99px; }

/* Document workspace */
.workspace { flex: 1; display: flex; min-height: 0; }
.editor { flex: 1; display: flex; flex-direction: column; }
.rulerbar { height: 30px; display: flex; }
.tabstop { width: 28px; height: 27px; padding: 3px; background: #d8d8d8; }
.hruler { margin-left: 340px; }
.rulernum { font: 12px "Open Sans", sans-serif; fill: #444; text-anchor: middle; }
.canvas { flex: 1; display: flex; overflow: hidden; }
.page { width: 1189px; height: 767px; margin-left: 342px; background: #fff; border: solid #c6c6c6; border-width: 0 1px; padding: 0 167px 0 225px; font: 24px/31.600px "Liberation Serif", "Times New Roman", serif; font-kerning: none; color: #000; }
.headings { height: 142px; padding-top: 1px; }
.headings p { margin: 0; }
.chapter { text-align: center; font-weight: 700; }
.section { font-weight: 700; display: flex; }
.section span { width: 54px; }
.caption { padding-left: 54px; }
.tablewrap { position: relative; width: 793px; }
.movehandle { position: absolute; left: -19px; top: -19px; }
.resize { position: absolute; left: 793px; top: 585px; width: 18px; height: 19px; border: 1.500px solid #aaa; background: #fff; }
table { border-collapse: collapse; table-layout: fixed; width: 793px; }
.c1 { width: 65px; } .c2 { width: 332px; } .c3 { width: 198px; } .c4 { width: 197px; }
td, th { border: 1px solid #000; padding: 0 0 0 10px; vertical-align: top; text-align: left; white-space: nowrap; }
td:nth-last-child(2), td:nth-last-child(3) { padding-left: 11px; }
th { text-align: center; padding: 0; }
th.left { text-align: left; padding-left: 10px; }
th.left:first-child { padding-left: 11px; }
.r48 { height: 48px; } .r49 { height: 49px; } .r96 { height: 96px; }
td.recap { padding: 47px 0 0 10px; }
u { text-decoration: none; background: url("data:image/svg+xml,%3Csvg xmlns='http://www.w3.org/2000/svg' width='6' height='4'%3E%3Cpath d='M0 .5L3 3.500L6 .5' fill='none' stroke='%23f01010' stroke-width='1.200'/%3E%3C/svg%3E") repeat-x 0 100%; }
.grammar { background: linear-gradient(#2b6fd6 0 1px, transparent 1px 3px, #2b6fd6 3px 4px) repeat-x 0 100% / 4px 4px; }

.scrollbar { width: 20px; padding: 3px 1px 0 0; display: flex; flex-direction: column; background: #dcdcdc; border-right: 1px solid #e6e6e6; }
.sbtn { height: 19px; background: #fff; border: 1px solid #ababab; display: flex; align-items: center; justify-content: center; }
.thumb { height: 21px; margin: 301px 0 432px; background: #fff; border: 1px solid #ababab; }

/* Status bar */
.statusbar { height: 28px; flex: none; display: flex; align-items: center; background: #f3f3f3; border-top: 1px solid #c6c6c6; border-bottom: 1px solid #4a4440; font-size: 12.300px; letter-spacing: .1px; color: #444; padding: 2px 0 0 10px; }
.s-page { width: 105px; letter-spacing: .3px; } .s-words { width: 92px; letter-spacing: .25px; } .s-proof { width: 40px; padding-bottom: 3px; }
.views { display: flex; margin-left: auto; align-self: stretch; margin-top: -2px; }
.views span { width: 50px; display: flex; align-items: center; justify-content: center; }
.views .cur { background: #c5c5c5; }
.zoom { display: flex; align-items: center; margin-left: 7px; width: 215px; gap: 16px; }
.zoom svg { margin-top: -2px; }

/* Taskbar */
.taskbar {
  height: 59px; flex: none; display: flex; align-items: center; color: #fff; position: relative;
  background: linear-gradient(90deg, #33251b 0, #2f211a 380px, #35211a 620px, #40200f 900px, #461a12 1010px, #4a1512 1070px, #381a17 1130px, #2a1e1c 1280px, #23201c 1400px, #261e1e 1500px, #2b1d20 1700px, #271d20 100%);
}
.weather { display: flex; align-items: center; gap: 8px; width: 585px; padding: 0 0 2px 25px; line-height: 20px; }
.weather em { display: block; color: #ccc; }
.apps { display: flex; align-items: center; }
.search { width: 273px; height: 38px; margin-left: 18px; border-radius: 19px; background: #f4f2f1; display: flex; align-items: center; padding-left: 14px; color: #5c5c5c; font-size: 15.500px; }
.search span { margin-left: 11px; width: 148px; }
.castle { margin-left: 14px; }
.apps > svg, .app { margin-left: 25px; }
.apps > svg:first-child { margin-left: 0; }
.apps > svg.a1 { margin-left: 16px; }
.app { position: relative; }
.run::after { content: ""; position: absolute; left: 11px; bottom: -10px; width: 8px; height: 4px; border-radius: 2px; background: #9b9393; }
.app.word { width: 46px; height: 50px; margin-left: 16px; padding: 12px 0 0 9px; border-radius: 5px; background: rgba(255,255,255,.1); border: 1px solid rgba(255,255,255,.06); box-shadow: 3px 0 0 -1px rgba(255,255,255,.08); }
.word::after { content: ""; position: absolute; left: 14px; bottom: 0; width: 20px; height: 4px; border-radius: 2px; background: #0a8ff5; }
.wlogo { font: bold 12px "Open Sans", sans-serif; fill: #fff; text-anchor: middle; }
.tray { display: flex; align-items: center; margin-left: auto; padding-right: 27px; }
.cloud { margin-left: 23px; }
.wifi { margin-left: 20px; }
.vol, .bat { margin-left: 10px; }
.clock { width: 98px; text-align: right; margin-right: 11px; line-height: 20px; padding-bottom: 2px; letter-spacing: .35px; }
```
